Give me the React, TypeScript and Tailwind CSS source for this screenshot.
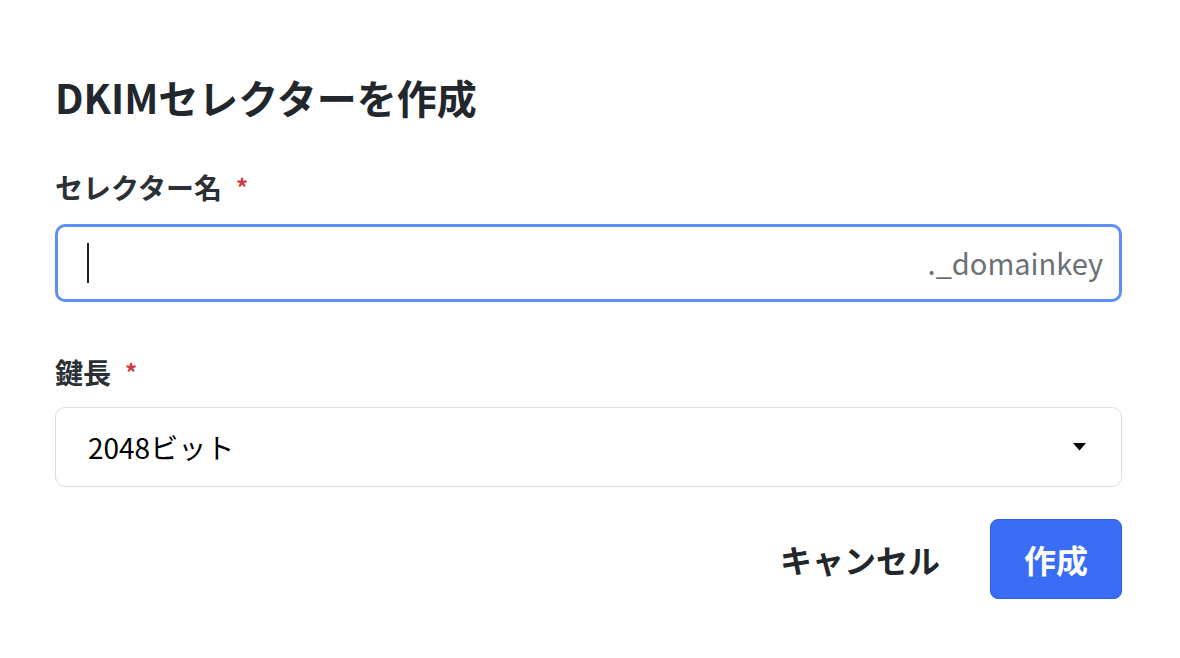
import React from 'react';

const App: React.FC = () => {
    return (
        <div
            className="min-h-screen w-full bg-white text-[#212529]"
            style={{fontFamily: '"Noto Sans CJK JP", "Noto Sans", sans-serif'}}
        >
            <div className="flex flex-col pl-[55px] pr-[58px] pt-[72px]">
                {/* Title */}
                <h1 className="text-[40px] leading-[50px] font-bold text-[#22272d]">DKIMセレクターを作成</h1>

                {/* Selector name */}
                <label className="mt-[45px] flex items-center h-[40px] text-[28px] font-bold text-[#2b3036]">
                    セレクター名
                    <span className="ml-[14px] text-[#d23a44] text-[24px]">*</span>
                </label>
                <div className="mt-[17px] flex items-center h-[78px] rounded-[10px] border-[3px] border-[#5e8ff3] pl-[29px] pr-[16px]">
                    <span className="block w-[2px] h-[40px] bg-[#222]" />
                    <span className="ml-auto text-[29px] text-[#6b7076]">._domainkey</span>
                </div>

                {/* Key length */}
                <label className="mt-[50px] flex items-center h-[40px] text-[28px] font-bold text-[#2b3036]">
                    鍵長
                    <span className="ml-[14px] text-[#d23a44] text-[24px]">*</span>
                </label>
                <div className="mt-[15px] flex items-center h-[80px] rounded-[10px] border border-[#dcdcdc] pl-[32px] pr-[35px]">
                    <span className="text-[28px] text-black">2048ビット</span>
                    <svg className="ml-auto" width="13" height="8" viewBox="0 0 13 8">
                        <path d="M0 0 L13 0 L6.5 7.5 Z" fill="#000" />
                    </svg>
                </div>

                {/* Actions */}
                <div className="mt-[32px] flex items-center justify-end gap-[50px]">
                    <button className="text-[32px] font-bold text-[#22272d]">キャンセル</button>
                    <button className="w-[132px] h-[80px] rounded-[8px] bg-[#3b6cf5] border border-[#3260e0] text-white text-[32px] font-bold">
                        作成
                    </button>
                </div>
            </div>
        </div>
    );
};

export default App;
